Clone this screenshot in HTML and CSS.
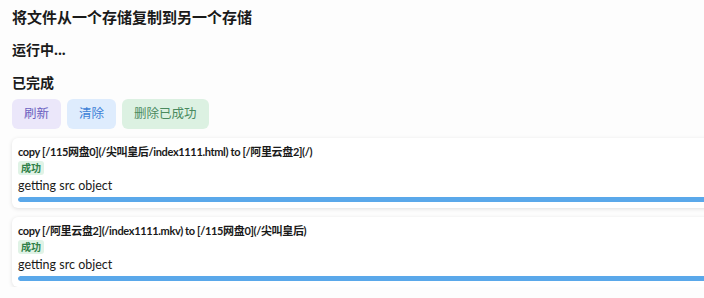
FILE: index.html
```html
<!DOCTYPE html>
<html lang="zh">
<head>
<meta charset="utf-8">
<link rel="stylesheet" href="styles.css">
</head>
<body>
<div class="page">
  <h2 class="title">将文件从一个存储复制到另一个存储</h2>
  <h3 class="section">运行中...</h3>
  <h3 class="section">已完成</h3>
  <div class="actions">
    <button class="btn btn-purple">刷新</button>
    <button class="btn btn-blue">清除</button>
    <button class="btn btn-green">删除已成功</button>
  </div>
  <div class="tasks">
    <div class="card">
      <div class="name">copy [/115网盘0](/尖叫皇后/index1111.html) to [/阿里云盘2](/)</div>
      <span class="badge">成功</span>
      <div class="status">getting src object</div>
      <div class="bar"><div class="fill" style="width:100%"></div></div>
    </div>
    <div class="card">
      <div class="name">copy [/阿里云盘2](/index1111.mkv) to [/115网盘0](/尖叫皇后)</div>
      <span class="badge">成功</span>
      <div class="status">getting src object</div>
      <div class="bar"><div class="fill" style="width:100%"></div></div>
    </div>
  </div>
</div>
</body>
</html>
```

FILE: styles.css
```css
html, body {
  margin: 0;
  padding: 0;
  background: #fdfdfd;
  overflow: hidden;
}
body {
  font-family: "Noto Sans", "Noto Sans CJK SC", sans-serif;
  color: #1a1a1a;
}
.page {
  padding: 6px 0 0 12px;
  width: 720px;
}
.title {
  font-size: 15px;
  font-weight: 700;
  margin: 0;
  line-height: 22px;
}
.section {
  font-size: 14px;
  font-weight: 700;
  margin: 11px 0 0;
  line-height: 22px;
}
.actions {
  display: flex;
  gap: 6px;
  margin-top: 5px;
}
.btn {
  font-family: inherit;
  font-size: 12.5px;
  border: none;
  border-radius: 6px;
  height: 30px;
  padding: 0 12px;
  line-height: 30px;
}
.btn-purple { background: #ebe7fa; color: #6a5fc0; }
.btn-blue { background: #deecfd; color: #3d7fd6; }
.btn-green { background: #dcf1e2; color: #4a8a5e; }
.tasks {
  display: flex;
  flex-direction: column;
  gap: 9px;
  margin-top: 9px;
}
.card {
  background: #fff;
  border-radius: 6px;
  box-shadow: 0 1px 4px rgba(0,0,0,0.12);
  padding: 5px 6px 6px;
  display: flex;
  flex-direction: column;
  align-items: flex-start;
}
.name {
  font-family: "Lato", "Noto Sans CJK SC", sans-serif;
  font-size: 11px;
  font-weight: 700;
  letter-spacing: -0.35px;
  line-height: 17px;
}
.badge {
  font-size: 10px;
  font-weight: 600;
  color: #2f8048;
  background: #e0f3e6;
  border-radius: 3px;
  padding: 0 3px;
  line-height: 14px;
  margin-top: 1px;
}
.status {
  font-family: "Lato", "Noto Sans CJK SC", sans-serif;
  font-size: 12.5px;
  line-height: 18px;
  margin-top: 2px;
}
.bar {
  align-self: stretch;
  height: 5px;
  background: #e3eefa;
  border-radius: 3px;
  margin-top: 2px;
  overflow: hidden;
}
.fill {
  height: 100%;
  background: #5aa8ea;
  border-radius: 3px;
}
```
